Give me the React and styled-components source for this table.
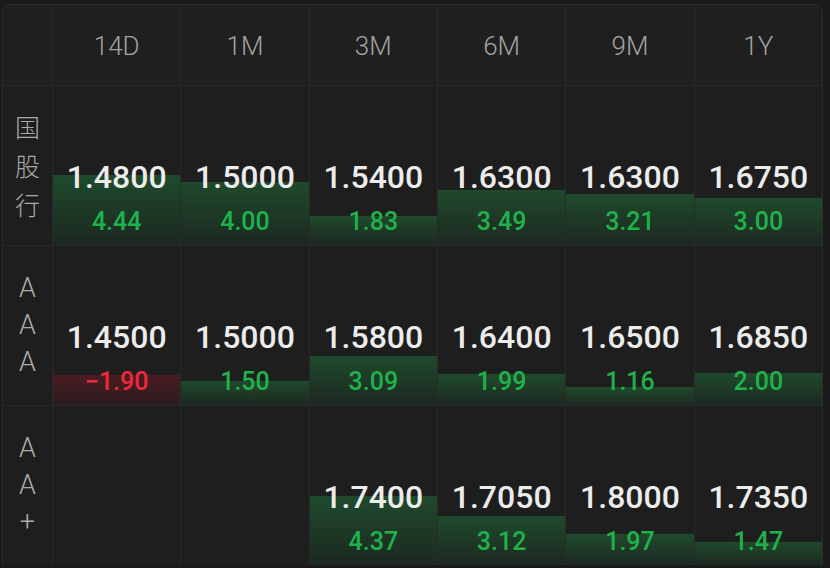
import React from 'react';
import styled, { createGlobalStyle } from 'styled-components';

const GlobalStyle = createGlobalStyle`
  html, body {
    margin: 0;
    padding: 0;
    background: #1a1a1a;
    font-family: Roboto, "Noto Sans CJK SC", sans-serif;
  }
`;

const TERMS = ['14D', '1M', '3M', '6M', '9M', '1Y'];

const ROWS = [
  {
    label: ['国', '股', '行'],
    cells: [
      ['1.4800', 4.44],
      ['1.5000', 4.0],
      ['1.5400', 1.83],
      ['1.6300', 3.49],
      ['1.6300', 3.21],
      ['1.6750', 3.0],
    ],
  },
  {
    label: ['A', 'A', 'A'],
    cells: [
      ['1.4500', -1.9],
      ['1.5000', 1.5],
      ['1.5800', 3.09],
      ['1.6400', 1.99],
      ['1.6500', 1.16],
      ['1.6850', 2.0],
    ],
  },
  {
    label: ['A', 'A', '+'],
    cells: [
      null,
      null,
      ['1.7400', 4.37],
      ['1.7050', 3.12],
      ['1.8000', 1.97],
      ['1.7350', 1.47],
    ],
  },
];

// bar height in px for one unit of change
const PX_PER_UNIT = 15.8;

export default function App() {
  return (
    <>
      <GlobalStyle />
      <Frame>
        <Table>
          <Corner />
          {TERMS.map((t) => (
            <HeadCell key={t}>{t}</HeadCell>
          ))}

          {ROWS.map((row, i) => (
            <React.Fragment key={i}>
              <LabelCell>
                {row.label.map((ch, j) => (
                  <LabelChar key={j} cjk={/[\u4e00-\u9fff]/.test(ch)}>{ch}</LabelChar>
                ))}
              </LabelCell>
              {row.cells.map((cell, j) => {
                if (!cell) return <Cell key={j} />;
                const [rate, change] = cell;
                const down = change < 0;
                return (
                  <Cell key={j} bar={Math.round(Math.abs(change) * PX_PER_UNIT)} down={down}>
                    <Rate>{rate}</Rate>
                    <Change down={down}>{down ? '−' : ''}{Math.abs(change).toFixed(2)}</Change>
                  </Cell>
                );
              })}
            </React.Fragment>
          ))}
        </Table>
      </Frame>
    </>
  );
}

const Frame = styled.div`
  margin: 4px 7px 0 2px;
  border: 1px solid #2c2c2c;
  border-bottom: none;
  border-radius: 8px 8px 0 0;
  background: #1e1e1e;
  overflow: hidden;
`;

const Table = styled.div`
  display: grid;
  grid-template-columns: 49px repeat(6, 1fr);
  grid-template-rows: 80px repeat(3, 160px);
`;

const Corner = styled.div`
  background: #1f1f1f;
`;

const HeadCell = styled.div`
  display: flex;
  align-items: center;
  justify-content: center;
  border-left: 1px solid #2a2a2a;
  background: #1f1f1f;
  color: #a3a3a3;
  font-size: 26px;
  font-weight: 300;
  padding-top: 1px;
`;

const LabelCell = styled.div`
  display: flex;
  flex-direction: column;
  align-items: center;
  justify-content: center;
  border-top: 1px solid #2a2a2a;
  color: #ababab;
`;

const LabelChar = styled.span`
  display: block;
  height: ${(p) => (p.cjk ? 39 : 37)}px;
  line-height: ${(p) => (p.cjk ? 39 : 37)}px;
  font-size: ${(p) => (p.cjk ? 25 : 27)}px;
  font-weight: 300;
  font-family: ${(p) => (p.cjk ? '"Noto Sans CJK SC", sans-serif' : 'Roboto, sans-serif')};
`;

const Cell = styled.div`
  display: flex;
  flex-direction: column;
  align-items: center;
  padding-top: 75px;
  border-top: 1px solid #2a2a2a;
  border-left: 1px solid #2a2a2a;
  background: ${(p) =>
    p.bar
      ? `linear-gradient(${p.down ? '#4b1c21, #2b1d1f' : '#1f4a2c, #1c2821'}) left bottom / 100% ${p.bar}px no-repeat`
      : 'transparent'};
`;

const Rate = styled.div`
  font-size: 32px;
  line-height: 32px;
  font-weight: 500;
  color: #ececec;
`;

const Change = styled.div`
  margin-top: 16px;
  font-size: 25px;
  line-height: 25px;
  font-weight: 500;
  color: ${(p) => (p.down ? '#f0283c' : '#1fb24a')};
`;
